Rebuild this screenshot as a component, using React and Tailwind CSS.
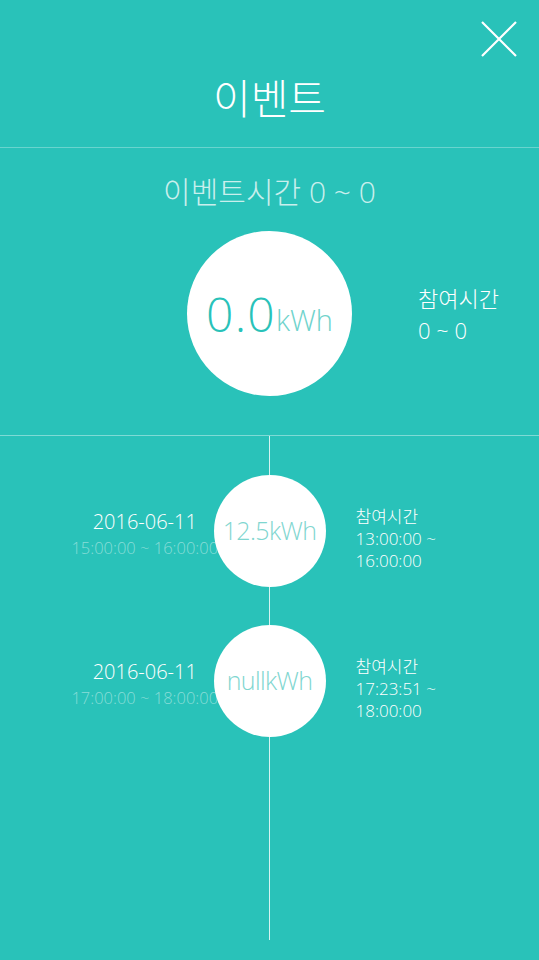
const font = { fontFamily: '"Open Sans", "Noto Sans CJK KR", sans-serif' };

const events = [
  {
    date: "2016-06-11",
    range: "15:00:00 ~ 16:00:00",
    value: "12.5kWh",
    joinStart: "13:00:00 ~",
    joinEnd: "16:00:00",
  },
  {
    date: "2016-06-11",
    range: "17:00:00 ~ 18:00:00",
    value: "nullkWh",
    joinStart: "17:23:51 ~",
    joinEnd: "18:00:00",
  },
];

const CloseIcon = () => (
  <svg width="36" height="36" viewBox="0 0 36 36" fill="none" stroke="white" strokeWidth="2.2">
    <path d="M1 1L35 35M35 1L1 35" />
  </svg>
);

const EventRow = ({ item }) => (
  <div className="grid grid-cols-[1fr_112px_1fr] items-center h-[150px]">
    <div className="mr-[-76px] mt-[8px] flex flex-col items-center whitespace-nowrap">
      <span className="text-[20px] leading-[26px] text-white font-light">{item.date}</span>
      <span className="text-[16.5px] leading-[26px] text-white/45 font-light">{item.range}</span>
    </div>
    <div className="relative z-10 w-[112px] h-[112px] rounded-full bg-white flex items-center justify-center">
      <span className="text-[25px] text-[#7fd6d0] font-light tracking-tight">{item.value}</span>
    </div>
    <div className="pl-[30px] mt-[16px] flex flex-col text-[17px] leading-[22px] text-white font-light whitespace-nowrap">
      <span>참여시간</span>
      <span>{item.joinStart}</span>
      <span>{item.joinEnd}</span>
    </div>
  </div>
);

export default function App() {
  return (
    <div className="w-[539px] h-[960px] bg-[#29c2b9] overflow-hidden" style={font}>
      <header className="relative h-[148px] flex justify-center border-b border-white/30">
        <h1 className="mt-[72px] text-[41px] leading-[52px] text-white font-light">이벤트</h1>
        <button className="absolute right-[22px] top-[21px]">
          <CloseIcon />
        </button>
      </header>

      <section className="h-[287px] flex flex-col items-center">
        <p className="mt-[25px] text-[30px] leading-[38px] text-white/75 font-light">이벤트시간 0 ~ 0</p>
        <div className="mt-[20px] w-full grid grid-cols-[1fr_165px_1fr] items-center">
          <div />
          <div className="w-[165px] h-[165px] rounded-full bg-white flex items-center justify-center">
            <span className="text-[48px] leading-none text-[#29c2b9] font-light tracking-wide">0.0</span>
            <span className="text-[29px] leading-none text-[#6fd3cc] font-light mt-[12px]">kWh</span>
          </div>
          <div className="pl-[66px] flex flex-col text-[22px] leading-[32px] text-white font-light">
            <span>참여시간</span>
            <span>0 ~ 0</span>
          </div>
        </div>
      </section>

      <section className="relative h-[505px] border-t border-white/40 pt-[20px]">
        <div className="absolute left-[269px] top-0 bottom-0 w-px bg-white/80" />
        {events.map((item, i) => (
          <EventRow key={i} item={item} />
        ))}
      </section>
    </div>
  );
}
